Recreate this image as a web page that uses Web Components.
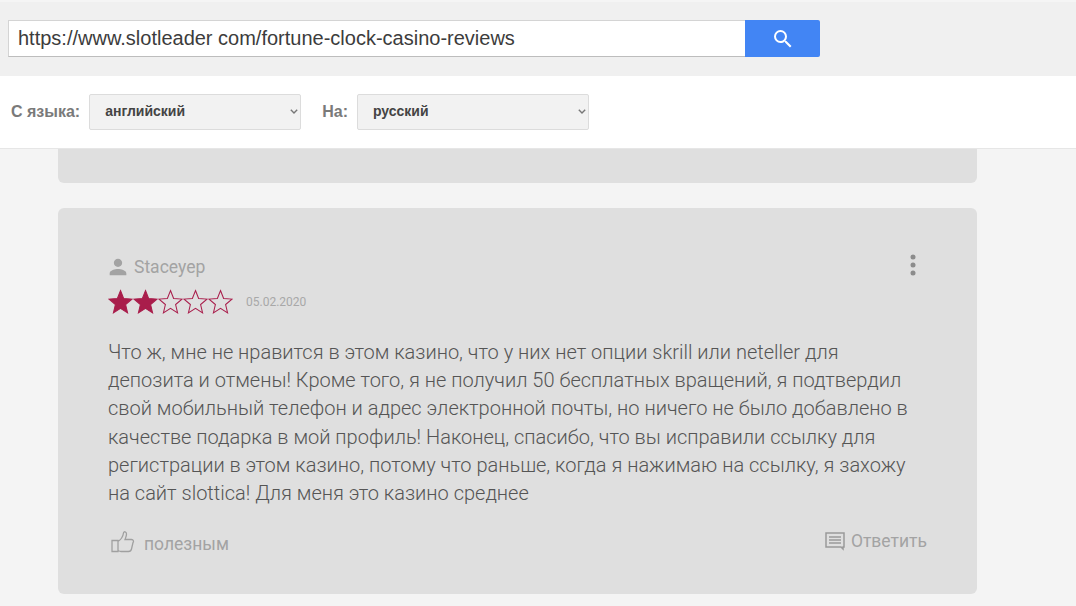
<!DOCTYPE html>
<html lang="ru">
<head>
<meta charset="utf-8">
<title>Перевод</title>
<style>
	html, body { margin: 0; padding: 0; height: 100%; overflow: hidden; background: #f4f4f4; }
	body { font-family: Roboto, "Liberation Sans", sans-serif; }
</style>
</head>
<body>
<url-bar value="https://www.slotleader com/fortune-clock-casino-reviews"></url-bar>
<lang-bar></lang-bar>
<review-list>
	<review-card stub></review-card>
	<review-card author="Staceyep" date="05.02.2020" rating="2" like="полезным" reply="Ответить">Что ж, мне не нравится в этом казино, что у них нет опции skrill или neteller для депозита и отмены! Кроме того, я не получил 50 бесплатных вращений, я подтвердил свой мобильный телефон и адрес электронной почты, но ничего не было добавлено в качестве подарка в мой профиль! Наконец, спасибо, что вы исправили ссылку для регистрации в этом казино, потому что раньше, когда я нажимаю на ссылку, я захожу на сайт slottica! Для меня это казино среднее</review-card>
</review-list>

<script>
// top strip with the address field and the blue search button
class UrlBar extends HTMLElement {
	constructor() {
		super();
		this.attachShadow({ mode: 'open' });
		this.shadowRoot.innerHTML = `
			<style>
				:host {
					display: flex;
					box-sizing: border-box;
					height: 76px;
					padding: 18px 0 0 8px;
					background: #f0f0f0;
					border-top: 2px solid #f5f5f5;
				}
				.field {
					box-sizing: border-box;
					width: 737px;
					height: 37px;
					padding: 0 0 1px 9px;
					display: flex;
					align-items: center;
					background: #fff;
					border: 1px solid #d4d4d4;
					border-right: 0;
					border-bottom-color: #bdbdbd;
					font: 20px "Liberation Sans", Arial, sans-serif;
					color: #3c3c3c;
				}
				.go {
					width: 75px;
					height: 37px;
					display: flex;
					align-items: center;
					justify-content: center;
					background: #4285f4;
					border-radius: 0 2px 2px 0;
				}
			</style>
			<div class="field">${this.getAttribute('value')}</div>
			<div class="go">
				<svg width="24" height="24" viewBox="0 0 24 24" fill="#fff">
					<path d="M15.500 14h-.79l-.28-.27A6.470 6.470 0 0 0 16 9.500 6.500 6.500 0 1 0 9.500 16c1.610 0 3.090-.59 4.230-1.570l.27.28v.79l5 4.990L20.490 19l-4.990-5zm-6 0C7.010 14 5 11.990 5 9.500S7.010 5 9.500 5 14 7.010 14 9.500 11.990 14 9.500 14z"/>
				</svg>
			</div>
		`;
	}
}

// white strip with the two language pickers
class LangBar extends HTMLElement {
	constructor() {
		super();
		this.attachShadow({ mode: 'open' });
		this.shadowRoot.innerHTML = `
			<style>
				:host {
					display: flex;
					align-items: center;
					box-sizing: border-box;
					height: 73px;
					padding: 0 0 1px 11px;
					background: #fff;
					border-bottom: 1px solid #e6e6e6;
					font: bold 16px "Liberation Sans", Arial, sans-serif;
					color: #7a7a7a;
				}
				.to { margin-left: 21px; }
				lang-select { margin-left: 9px; }
			</style>
			<span>С языка:</span>
			<lang-select style="--w: 212px">английский</lang-select>
			<span class="to">На:</span>
			<lang-select style="--w: 232px">русский</lang-select>
		`;
	}
}

class LangSelect extends HTMLElement {
	constructor() {
		super();
		this.attachShadow({ mode: 'open' });
		this.shadowRoot.innerHTML = `
			<style>
				:host {
					display: flex;
					align-items: center;
					justify-content: space-between;
					box-sizing: border-box;
					width: var(--w, 200px);
					height: 36px;
					padding: 0 1px 0 15px;
					background: #f2f2f2;
					border: 1px solid #dcdcdc;
					border-radius: 2px;
					font: bold 14px "Liberation Sans", Arial, sans-serif;
					color: #444;
				}
				span { margin-top: -2px; }
				svg { display: block; margin-right: 1px; }
			</style>
			<span><slot></slot></span>
			<svg width="8" height="5" viewBox="0 0 8 5" fill="none" stroke="#777" stroke-width="1.400">
				<path d="M.8.800L4 4l3.200-3.200"/>
			</svg>
		`;
	}
}

class ReviewList extends HTMLElement {
	constructor() {
		super();
		this.attachShadow({ mode: 'open' });
		this.shadowRoot.innerHTML = `
			<style>
				:host {
					display: flex;
					flex-direction: column;
					gap: 25px;
					width: 919px;
					margin-left: 58px;
				}
			</style>
			<slot></slot>
		`;
	}
}

class ReviewCard extends HTMLElement {
	constructor() {
		super();
		this.attachShadow({ mode: 'open' });
		this.render();
	}

	stars(rating) {
		const star = 'M12 1.500l3 7.600 8 .6-6.100 5.200 1.900 8-6.800-4.300-6.800 4.300 1.900-8L1 9.700l8-.6z';
		let out = '';
		for (let i = 0; i < 5; i++) {
			const on = i < rating;
			out += `<svg width="25" height="25" viewBox="0 0 24 24" fill="${on ? '#a91d4b' : 'none'}" stroke="#a91d4b" stroke-width="1"><path d="${star}"/></svg>`;
		}
		return out;
	}

	render() {
		if (this.hasAttribute('stub')) {
			this.shadowRoot.innerHTML = `
				<style>
					:host {
						display: block;
						height: 34px;
						background: #dfdfdf;
						border-radius: 0 0 6px 6px;
					}
				</style>
			`;
			return;
		}
		this.shadowRoot.innerHTML = `
			<style>
				:host {
					display: block;
					box-sizing: border-box;
					height: 386px;
					padding: 44px 50px 0 50px;
					background: #dfdfdf;
					border-radius: 6px;
					font-family: Roboto, "Liberation Sans", sans-serif;
				}
				.who {
					display: flex;
					align-items: center;
					justify-content: space-between;
					height: 28px;
				}
				.name {
					display: flex;
					align-items: center;
					gap: 6px;
					margin-top: 2px;
					font-size: 17.500px;
					color: #a3a3a3;
				}
				.more { display: block; margin: -3px 11px 0 0; }
				.rate {
					display: flex;
					align-items: center;
					height: 25px;
					margin-top: 9px;
				}
				.rate svg { display: block; }
				.date {
					margin-left: 13px;
					font-size: 12px;
					color: #a8a8a8;
				}
				.text {
					margin-top: 24px;
					font-size: 20px;
					font-weight: 300;
					line-height: 28.200px;
					color: #555;
				}
				.foot {
					display: flex;
					justify-content: space-between;
					margin-top: 23px;
					font-size: 17.500px;
					color: #a3a3a3;
				}
				.act { display: flex; align-items: center; }
				.like { gap: 9px; padding-top: 2px; }
				.like svg { margin-top: -4px; }
				.reply { gap: 6px; margin-top: -3px; height: 28px; }
			</style>
			<div class="who">
				<div class="name">
					<svg width="20" height="20" viewBox="0 0 24 24" fill="#a3a3a3"><path d="M12 12c2.700 0 5-2.200 5-5s-2.300-5-5-5-5 2.200-5 5 2.300 5 5 5zm0 2.500c-3.300 0-10 1.700-10 5V22h20v-2.500c0-3.300-6.700-5-10-5z"/></svg>
					<span>${this.getAttribute('author')}</span>
				</div>
				<svg class="more" width="6" height="22" viewBox="0 0 6 22" fill="#8c8c8c"><circle cx="3" cy="3" r="2.500"/><circle cx="3" cy="11" r="2.500"/><circle cx="3" cy="19" r="2.500"/></svg>
			</div>
			<div class="rate">${this.stars(Number(this.getAttribute('rating')))}<span class="date">${this.getAttribute('date')}</span></div>
			<div class="text"><slot></slot></div>
			<div class="foot">
				<div class="act like">
					<svg width="27" height="25" viewBox="0 0 27 25" fill="none" stroke="#a0a0a0" stroke-width="1.300"><path d="M4 11.500h6v11H4zM10 12.500c3-2 5-5 5.500-8.500 .3-2 3-1.500 3 1 0 2-1 4-1.500 5.500h6.500c2 0 2.500 2 1.500 3l-1.500 6.500c-.3 1.500-1.500 2.500-3 2.500H13c-1 0-2-.5-3-1"/></svg>
					<span>${this.getAttribute('like')}</span>
				</div>
				<div class="act reply">
					<svg width="20" height="20" viewBox="0 0 20 20" fill="none" stroke="#9a9a9a" stroke-width="1.500"><path d="M1 2h18v14h-1v2l-2-2H1zM4 6h12M4 9h12M4 12h12"/></svg>
					<span>${this.getAttribute('reply')}</span>
				</div>
			</div>
		`;
	}
}

customElements.define('url-bar', UrlBar);
customElements.define('lang-select', LangSelect);
customElements.define('lang-bar', LangBar);
customElements.define('review-list', ReviewList);
customElements.define('review-card', ReviewCard);
</script>
</body>
</html>
